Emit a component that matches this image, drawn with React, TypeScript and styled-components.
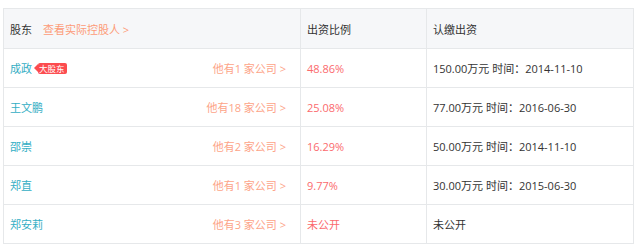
import React from "react";
import styled, { createGlobalStyle } from "styled-components";

const GlobalStyle = createGlobalStyle`
  html, body {
    margin: 0;
    padding: 0;
    background: #ffffff;
  }
  body {
    font-family: "Open Sans", "Noto Sans CJK SC", sans-serif;
    font-size: 11px;
    color: #333333;
  }
`;

const holders = [
  { name: "成政", big: true, count: "1", ratio: "48.86%", paid: "150.00万元 时间：2014-11-10" },
  { name: "王文鹏", big: false, count: "18", ratio: "25.08%", paid: "77.00万元 时间：2016-06-30" },
  { name: "邵崇", big: false, count: "2", ratio: "16.29%", paid: "50.00万元 时间：2014-11-10" },
  { name: "郑直", big: false, count: "1", ratio: "9.77%", paid: "30.00万元 时间：2015-06-30" },
  { name: "郑安莉", big: false, count: "3", ratio: "未公开", paid: "未公开" },
];

const App: React.FC = () => {
  return (
    <Page>
      <GlobalStyle />
      <Table>
        <thead>
          <HeadRow>
            <HeadCell>
              <HolderHead>
                股东
                <ControlLink>查看实际控股人 &gt;</ControlLink>
              </HolderHead>
            </HeadCell>
            <HeadCell>出资比例</HeadCell>
            <HeadCell>认缴出资</HeadCell>
          </HeadRow>
        </thead>
        <tbody>
          {holders.map((h, i) => (
            <Row key={i}>
              <Cell>
                <HolderLine>
                  <Name>{h.name}</Name>
                  {h.big && <Badge>大股东</Badge>}
                  <Companies>他有{h.count} 家公司 &gt;</Companies>
                </HolderLine>
              </Cell>
              <Cell>
                <Ratio>{h.ratio}</Ratio>
              </Cell>
              <Cell>{h.paid}</Cell>
            </Row>
          ))}
        </tbody>
      </Table>
    </Page>
  );
};

const Page = styled.div`
  padding: 8px 6px 0 3px;
  height: 249px;
  box-sizing: border-box;
  overflow: hidden;
`;

const Table = styled.table`
  width: 631px;
  border-collapse: collapse;
  table-layout: fixed;
`;

const HeadRow = styled.tr`
  height: 40px;
  background: #f6f7f9;
`;

const HeadCell = styled.th`
  border: 1px solid #e6e8ea;
  padding: 0 0 0 6px;
  text-align: left;
  font-weight: normal;
  color: #333333;
  white-space: nowrap;

  &:first-child {
    width: 290px;
  }
  &:nth-child(2) {
    width: 119px;
  }
`;

const HolderHead = styled.div`
  display: flex;
  align-items: center;
  gap: 11px;
`;

const ControlLink = styled.span`
  color: #fd9b78;
`;

const Row = styled.tr`
  height: 39px;
`;

const Cell = styled.td`
  border: 1px solid #e6e8ea;
  padding: 0 0 0 6px;
  color: #333333;
  white-space: nowrap;

  &:first-child {
    padding-right: 14px;
  }
`;

const HolderLine = styled.div`
  display: flex;
  align-items: center;
`;

const Name = styled.span`
  color: #33aec4;
`;

const Badge = styled.span`
  position: relative;
  margin-left: 6px;
  padding: 0 2px 0 1px;
  height: 11px;
  line-height: 11px;
  font-size: 8.5px;
  color: #ffffff;
  background: #fc4c4f;
  border-radius: 2px;

  &::before {
    content: "";
    position: absolute;
    left: -4px;
    top: 1.5px;
    border-top: 4px solid transparent;
    border-bottom: 4px solid transparent;
    border-right: 4px solid #fc4c4f;
  }
`;

const Companies = styled.span`
  margin-left: auto;
  color: #fda488;
`;

const Ratio = styled.span`
  color: #fb6a6d;
`;

export default App;
